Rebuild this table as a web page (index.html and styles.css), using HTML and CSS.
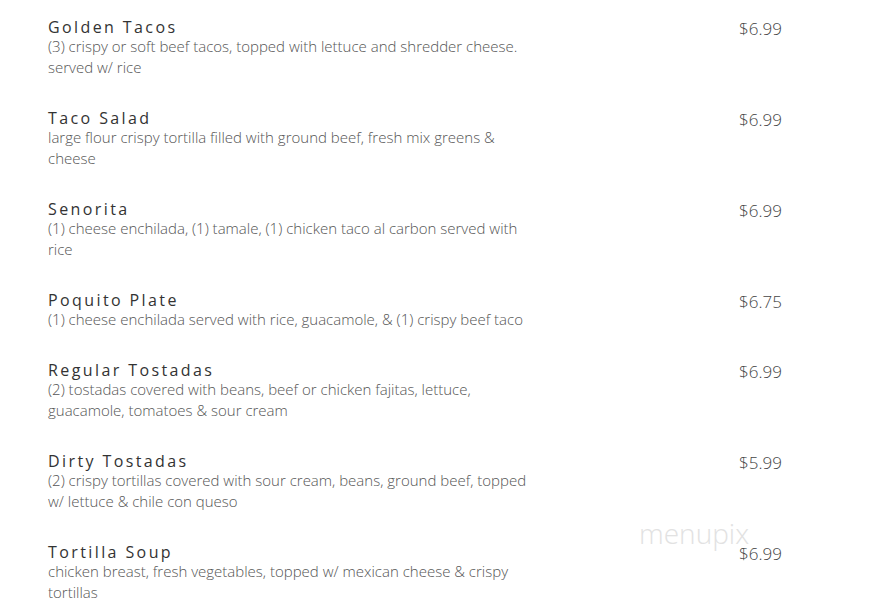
FILE: index.html
```html
<!DOCTYPE html>
<html>
<head>
<meta charset="utf-8">
<link rel="stylesheet" href="styles.css">
</head>
<body>
<div class="menu">
  <div class="item">
    <div class="info">
      <div class="name">Golden Tacos</div>
      <div class="desc">(3) crispy or soft beef tacos, topped with lettuce and shredder cheese. served w/ rice</div>
    </div>
    <div class="price">$6.99</div>
  </div>
  <div class="item">
    <div class="info">
      <div class="name">Taco Salad</div>
      <div class="desc">large flour crispy tortilla filled with ground beef, fresh mix greens &amp; cheese</div>
    </div>
    <div class="price">$6.99</div>
  </div>
  <div class="item">
    <div class="info">
      <div class="name">Senorita</div>
      <div class="desc">(1) cheese enchilada, (1) tamale, (1) chicken taco al carbon served with rice</div>
    </div>
    <div class="price">$6.99</div>
  </div>
  <div class="item">
    <div class="info">
      <div class="name">Poquito Plate</div>
      <div class="desc">(1) cheese enchilada served with rice, guacamole, &amp; (1) crispy beef taco</div>
    </div>
    <div class="price">$6.75</div>
  </div>
  <div class="item">
    <div class="info">
      <div class="name">Regular Tostadas</div>
      <div class="desc">(2) tostadas covered with beans, beef or chicken fajitas, lettuce, guacamole, tomatoes &amp; sour cream</div>
    </div>
    <div class="price">$6.99</div>
  </div>
  <div class="item">
    <div class="info">
      <div class="name">Dirty Tostadas</div>
      <div class="desc">(2) crispy tortillas covered with sour cream, beans, ground beef, topped w/ lettuce &amp; chile con queso</div>
    </div>
    <div class="price">$5.99</div>
  </div>
  <div class="item">
    <div class="info">
      <div class="name">Tortilla Soup</div>
      <div class="desc">chicken breast, fresh vegetables, topped w/ mexican cheese &amp; crispy tortillas</div>
    </div>
    <div class="price">$6.99</div>
  </div>
</div>
<div class="watermark">menupix</div>
</body>
</html>
```
FILE: styles.css
```css
html, body {
  margin: 0;
  padding: 0;
  background: #fff;
}
body {
  font-family: "Open Sans", sans-serif;
  color: #444;
  position: relative;
  height: 616px;
  overflow: hidden;
}
.menu {
  padding: 18px 0 0 48px;
  display: flex;
  flex-direction: column;
  gap: 31px;
}
.item {
  display: grid;
  grid-template-columns: 691px auto;
}
.info {
  width: 480px;
}
.name {
  font-size: 16px;
  line-height: 18px;
  letter-spacing: 2.4px;
  color: #333;
  font-weight: 400;
}
.desc {
  font-size: 15px;
  line-height: 21px;
  color: #555;
  font-weight: 300;
}
.price {
  font-size: 17px;
  line-height: 24px;
  color: #444;
  font-weight: 300;
  margin-top: -1px;
}
.watermark {
  position: absolute;
  left: 639px;
  top: 514px;
  font-family: "Open Sans", sans-serif;
  font-size: 28px;
  font-weight: 300;
  color: #e2e2e2;
}
```
